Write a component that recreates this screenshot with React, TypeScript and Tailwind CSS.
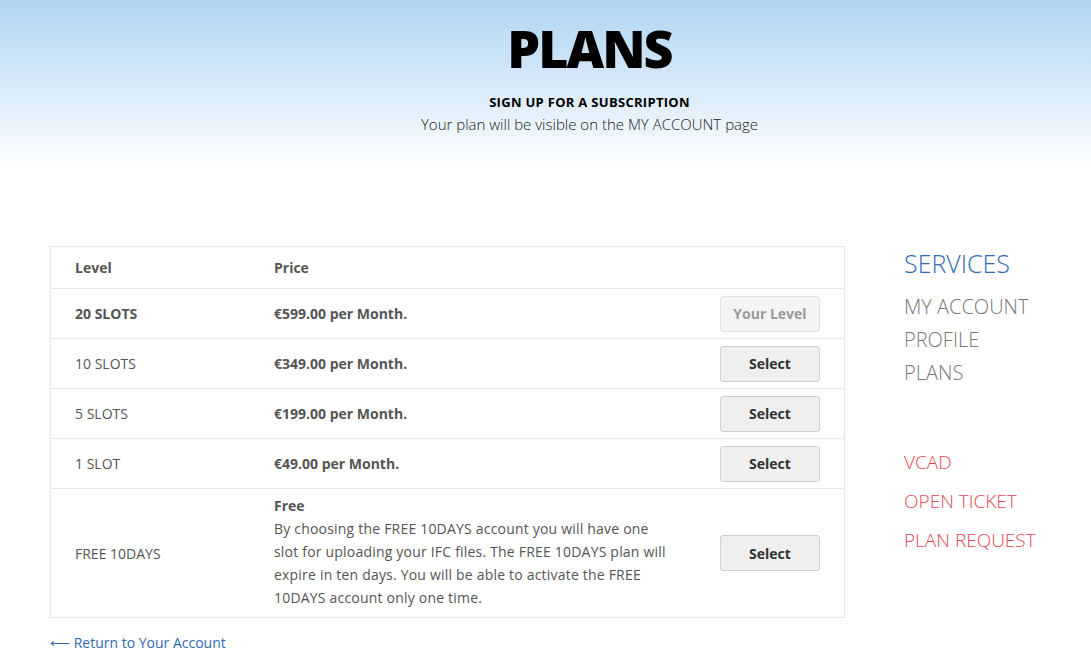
const rows = [
  { level: "20 SLOTS", price: "€599.00 per Month.", current: true },
  { level: "10 SLOTS", price: "€349.00 per Month." },
  { level: "5 SLOTS", price: "€199.00 per Month." },
  { level: "1 SLOT", price: "€49.00 per Month." },
];

function Btn({ current }: { current?: boolean }) {
  return (
    <button
      className={
        current
          ? "w-[100px] h-[36px] rounded-[3px] border border-[#e2e2e2] bg-[#f4f4f4] text-[14px] font-bold text-[#999]"
          : "w-[100px] h-[36px] rounded-[3px] border border-[#cfcfcf] bg-[#efefef] text-[14px] font-bold text-[#333]"
      }
    >
      {current ? "Your Level" : "Select"}
    </button>
  );
}

export default function App() {
  return (
    <div className="min-h-[669px] bg-white font-['Open_Sans',sans-serif] text-[#555]">
      {/* header */}
      <div className="h-[170px] bg-gradient-to-b from-[#afd4f2] to-white flex flex-col items-center pt-[19px] pl-[88px]">
        <h1 className="text-[52px] leading-[58px] font-extrabold text-black tracking-[-2px]">PLANS</h1>
        <p className="mt-[16px] text-[13px] font-bold text-black tracking-[0.3px]">SIGN UP FOR A SUBSCRIPTION</p>
        <p className="mt-[0px] text-[15px] font-light text-[#222]">Your plan will be visible on the MY ACCOUNT page</p>
      </div>

      <div className="flex px-[50px] pt-[76px]">
        {/* table */}
        <div className="w-[795px]">
          <div className="border border-[#e8e8e8]">
            <div className="flex h-[42px] items-center text-[14px] font-bold border-b border-[#e8e8e8]">
              <div className="w-[223px] pl-[24px]">Level</div>
              <div>Price</div>
            </div>
            {rows.map((r) => (
              <div key={r.level} className="flex h-[50px] items-center text-[14px] border-b border-[#e8e8e8]">
                <div className={"w-[223px] pl-[24px] " + (r.current ? "font-bold" : "")}>{r.level}</div>
                <div className="flex-1 font-bold">{r.price}</div>
                <div className="pr-[24px]">
                  <Btn current={r.current} />
                </div>
              </div>
            ))}
            <div className="flex h-[128px] items-center text-[14px]">
              <div className="w-[223px] pl-[24px]">FREE 10DAYS</div>
              <div className="w-[420px] leading-[23px] -mt-[3px]">
                <div className="font-bold">Free</div>
                <div className="tracking-[0.2px]">
                  By choosing the FREE 10DAYS account you will have one
                  <br />
                  slot for uploading your IFC files. The FREE 10DAYS plan will
                  <br />
                  expire in ten days. You will be able to activate the FREE
                  <br />
                  10DAYS account only one time.
                </div>
              </div>
              <div className="ml-auto pr-[24px]">
                <Btn />
              </div>
            </div>
          </div>
          <a className="block mt-[14px] text-[14px] text-[#2f6bb0]">⟵ Return to Your Account</a>
        </div>

        {/* sidebar */}
        <div className="ml-[59px] flex flex-col">
          <div className="text-[25px] font-light text-[#2f6cb2] leading-[34px]">SERVICES</div>
          <div className="mt-[10px] flex flex-col text-[20px] font-light text-[#777] leading-[33px]">
            <span>MY ACCOUNT</span>
            <span>PROFILE</span>
            <span>PLANS</span>
          </div>
          <div className="mt-[54px] flex flex-col text-[19px] font-light text-[#e2485a] leading-[39px]">
            <span>VCAD</span>
            <span>OPEN TICKET</span>
            <span>PLAN REQUEST</span>
          </div>
        </div>
      </div>
    </div>
  );
}
